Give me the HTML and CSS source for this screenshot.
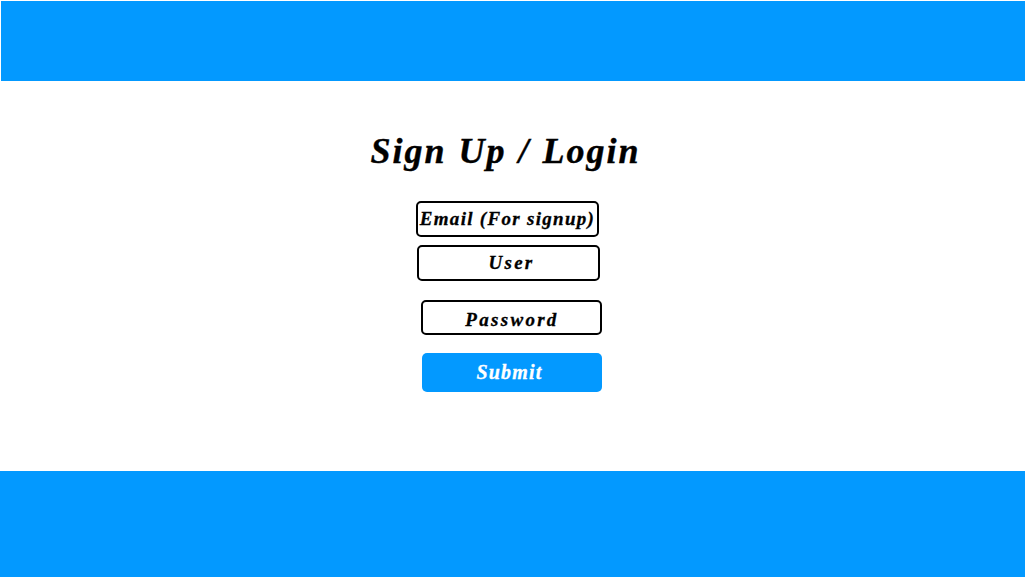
FILE: index.html
```html
<!DOCTYPE html>
<html>
<head>
<meta charset="utf-8">
<link rel="stylesheet" href="styles.css">
</head>
<body>
<header class="topbar"></header>
<main class="content">
  <h1 class="title">Sign Up / Login</h1>
  <div class="field field-email">Email (For signup)</div>
  <div class="field field-user">User</div>
  <div class="field field-pass">Password</div>
  <div class="submit">Submit</div>
</main>
<footer class="bottombar"></footer>
</body>
</html>
```
FILE: styles.css
```css
html, body {
  margin: 0;
  padding: 0;
  background: #ffffff;
}
body {
  width: 1026px;
  height: 577px;
  overflow: hidden;
  font-family: "Liberation Serif", "Times New Roman", serif;
  font-weight: bold;
  font-style: italic;
  color: #000;
}
.topbar {
  height: 80px;
  margin: 1px 1px 0 1px;
  background: #0399ff;
}
.content {
  height: 390px;
  display: flex;
  flex-direction: column;
  align-items: center;
  box-sizing: border-box;
  padding-top: 50px;
}
.title {
  margin: 0 0 0 -15px;
  font-size: 36px;
  line-height: 40px;
  font-weight: bold;
  letter-spacing: 2px;
  word-spacing: 1px;
  -webkit-text-stroke: 0.4px #000;
}
.field {
  box-sizing: border-box;
  width: 183px;
  height: 36px;
  border: 2px solid #000;
  border-radius: 5px;
  display: flex;
  align-items: center;
  justify-content: center;
  font-size: 19px;
  white-space: nowrap;
  -webkit-text-stroke: 0.3px #000;
}
.field-email {
  margin: 30px 0 0 -11px;
  letter-spacing: 1.3px;
}
.field-user {
  margin: 8px 0 0 -9px;
  letter-spacing: 2.3px;
  padding-left: 6px;
}
.field-pass {
  margin: 19px 0 0 -4px;
  width: 181px;
  height: 35px;
  padding-top: 4px;
  padding-left: 2px;
  letter-spacing: 2.3px;
}
.submit {
  box-sizing: border-box;
  width: 180px;
  height: 39px;
  margin: 18px 0 0 -2px;
  padding-right: 5px;
  border-radius: 5px;
  background: #0399ff;
  color: #fff;
  display: flex;
  align-items: center;
  justify-content: center;
  font-size: 20px;
  white-space: nowrap;
  letter-spacing: 1.2px;
  -webkit-text-stroke: 0.3px #fff;
}
.bottombar {
  height: 106px;
  margin-right: 1px;
  background: #0399ff;
}
```
